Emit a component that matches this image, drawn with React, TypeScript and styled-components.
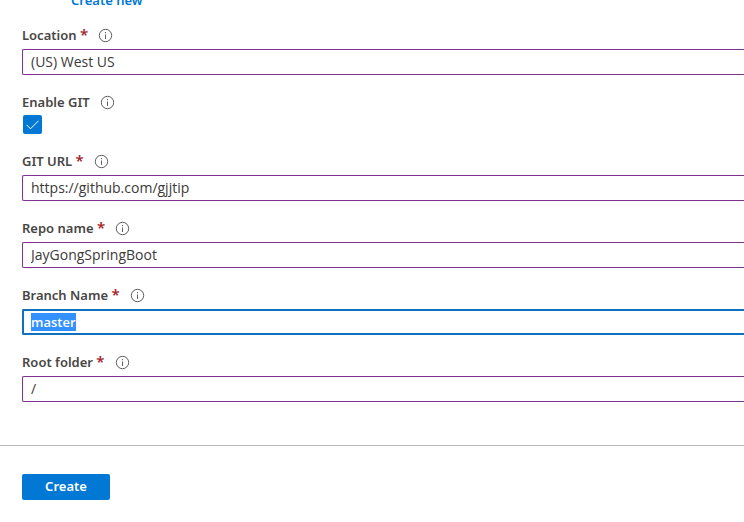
import React from "react";
import styled, { createGlobalStyle, css } from "styled-components";

const Global = createGlobalStyle`
  * { box-sizing: border-box; }
  body { margin: 0; background: #fff; color: #3b3a39; font-family: "Noto Sans", "Open Sans", sans-serif; font-size: 13px; overflow: hidden; }
  input, button { font: inherit; color: inherit; }
`;
const Page = styled.main`
  display: flex;
  flex-direction: column;
  min-height: 100vh;
  overflow: hidden;
`;
const CreateNew = styled.a`
  align-self: flex-start;
  margin: -9px 0 0 71px;
  line-height: 18px;
  font-weight: 600;
  color: #0078d4;
  text-decoration: none;
`;
const Form = styled.form`
  display: flex;
  flex-direction: column;
`;
const Fields = styled.div`
  display: flex;
  flex-direction: column;
  gap: 18px;
  padding: 17px 0 43px 22px;
`;
const Field = styled.div<{ $tight?: boolean }>`
  display: flex;
  flex-direction: column;
  gap: ${p => (p.$tight ? 4 : 5)}px;
`;
const LabelRow = styled.div`
  display: flex;
  align-items: center;
  gap: 10px;
  height: 18px;
`;
const Label = styled.label`
  font-weight: 600;
  line-height: 18px;
  color: #484644;
`;
const Star = styled.span`
  color: #a4262c;
  font-size: 15px;
  line-height: 1;
`;
/* The boxes run off the right side of the pane, so they have no right edge. */
const TextBox = styled.input<{ $active?: boolean }>`
  width: 100%;
  height: 26px;
  padding: 0 8px 1px;
  border: 1px solid #80338f;
  border-right: 0;
  border-radius: 2px 0 0 2px;
  outline: none;
  background: #fff;
  font-family: "Open Sans", "Noto Sans", sans-serif;
  font-size: 14px;
  ${p => p.$active && css`
    border-width: 2px 0 2px 2px;
    border-color: #0f70bf;
    padding: 0 7px 1px;
    font-size: 13px;
    font-weight: 600;
  `}
  &::selection { background: #3390ff; color: #fff; }
`;
const Check = styled.span`
  display: grid;
  width: 19px;
  height: 19px;
  margin-left: 1px;
  > * { grid-area: 1 / 1; }
  svg { pointer-events: none; place-self: center; }
`;
const CheckInput = styled.input`
  appearance: none;
  width: 100%;
  height: 100%;
  margin: 0;
  border-radius: 2px;
  background: #0078d4;
`;
const Footer = styled.footer`
  border-top: 1px solid #bbb9b8;
  padding: 28px 22px;
`;
const Button = styled.button`
  width: 88px;
  height: 26px;
  padding: 0 0 2px;
  border: 0;
  border-radius: 2px;
  background: #0078d4;
  color: #fff;
  font-weight: 600;
`;

const Info = () => (
  <svg width="15" height="15" viewBox="0 0 15 15" fill="none" aria-hidden="true">
    <circle cx="7.5" cy="7.5" r="6.2" stroke="#605e5c" />
    <path d="M7.5 6.5v4.5M7.5 4v1.2" stroke="#605e5c" />
  </svg>
);

function TextField({ id, label, value, active }: { id: string; label: string; value: string; active?: boolean }) {
  return (
    <Field>
      <LabelRow><Label htmlFor={id}>{label} <Star>*</Star></Label><Info /></LabelRow>
      <TextBox id={id} defaultValue={value} $active={active} autoFocus={active} onFocus={active ? e => e.target.select() : undefined} />
    </Field>
  );
}

export default function App() {
  return (
    <>
      <Global />
      <Page>
        <CreateNew href="#">Create new</CreateNew>
        <Form>
          <Fields>
            <TextField id="location" label="Location" value="(US) West US" />
            <Field $tight>
              <LabelRow><Label htmlFor="git">Enable GIT</Label><Info /></LabelRow>
              <Check>
                <CheckInput id="git" type="checkbox" defaultChecked />
                <svg width="13" height="10" viewBox="0 0 13 10" fill="none"><path d="M.5 4.8l4 4L12.5.8" stroke="#fff" /></svg>
              </Check>
            </Field>
            <TextField id="url" label="GIT URL" value="https://github.com/gjjtip" />
            <TextField id="repo" label="Repo name" value="JayGongSpringBoot" />
            <TextField id="branch" label="Branch Name" value="master" active />
            <TextField id="root-folder" label="Root folder" value="/" />
          </Fields>
          <Footer><Button type="button">Create</Button></Footer>
        </Form>
      </Page>
    </>
  );
}
